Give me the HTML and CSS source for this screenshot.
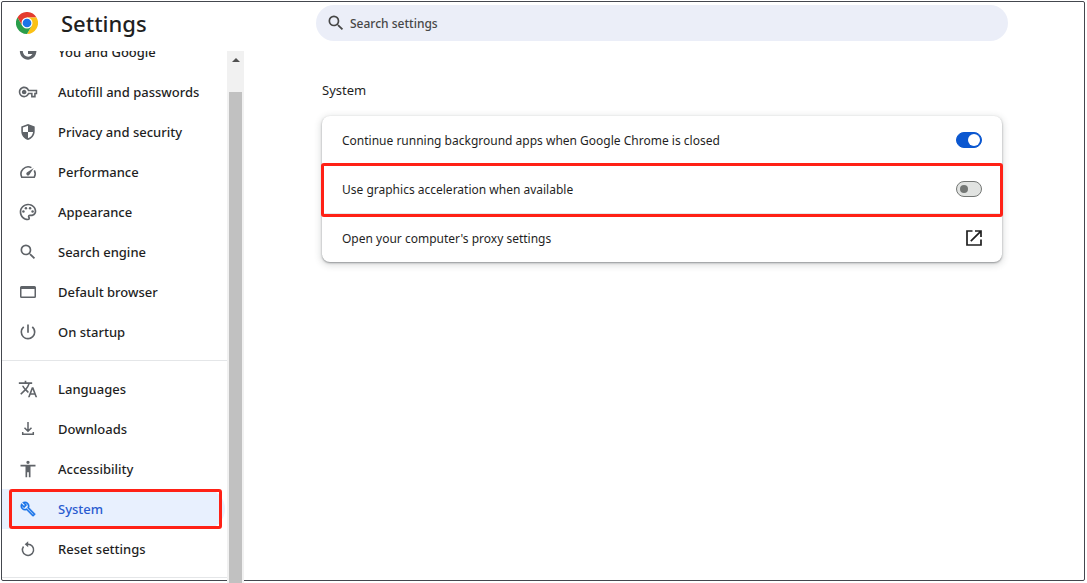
FILE: index.html
```html
<!DOCTYPE html>
<html lang="en">
<head>
<meta charset="utf-8">
<meta name="viewport" content="width=device-width, initial-scale=1">
<title>Settings - System</title>
<link rel="stylesheet" href="styles.css">
</head>
<body>
<div class="window">
  <header class="toolbar">
    <div class="brand">
      <svg class="logo" viewBox="0 0 48 48" aria-hidden="true">
        <path fill="#e33b2e" d="M24 12h20.800A24 24 0 0 0 3.200 12L13.600 30z"/>
        <path fill="#fbc116" d="M24 12h20.800A24 24 0 0 1 24 48l10.400-18z"/>
        <path fill="#2a9d4a" d="M34.400 30 24 48A24 24 0 0 1 3.200 12L13.600 30z"/>
        <circle cx="24" cy="24" r="12" fill="#fff"/>
        <circle cx="24" cy="24" r="9.500" fill="#1a73e8"/>
      </svg>
      <h1 class="title">Settings</h1>
    </div>
    <div class="search-area">
      <label class="search">
        <svg class="search-icon" viewBox="0 0 24 24" aria-hidden="true"><path d="M15.500 14h-.79l-.28-.27A6.470 6.470 0 0 0 16 9.500 6.500 6.500 0 1 0 9.500 16c1.610 0 3.090-.59 4.230-1.570l.27.28v.79l5 4.990L20.490 19l-4.990-5zm-6 0C7.010 14 5 11.990 5 9.500S7.010 5 9.500 5 14 7.010 14 9.500 11.990 14 9.500 14z"/></svg>
        <input class="search-input" type="search" placeholder="Search settings" aria-label="Search settings">
      </label>
    </div>
  </header>
  <div class="content">
    <nav class="sidebar" aria-label="Settings">
      <div class="menu">
        <a class="item" href="#people"><svg class="icon" viewBox="0 0 20 20" aria-hidden="true"><path d="M15.300 5.200A6.700 6.700 0 1 0 16.700 10.500H10" fill="none" stroke="currentColor" stroke-width="3"/></svg>You and Google</a>
        <a class="item" href="#autofill"><svg class="icon" viewBox="-1 -1 26 26" aria-hidden="true"><path d="M22 19h-6v-4h-2.680c-1.140 2.420-3.600 4-6.320 4-3.860 0-7-3.140-7-7s3.140-7 7-7c2.720 0 5.170 1.580 6.320 4H24v6h-2v4zm-4-2h2v-4h2v-2H11.940l-.23-.67C11.010 8.340 9.110 7 7 7c-2.760 0-5 2.240-5 5s2.240 5 5 5c2.110 0 4.010-1.340 4.710-3.330l.23-.67H18v4zM7 15c-1.650 0-3-1.350-3-3s1.350-3 3-3 3 1.350 3 3-1.350 3-3 3z"/></svg>Autofill and passwords</a>
        <a class="item" href="#privacy"><svg class="icon" viewBox="0 0 20 20" aria-hidden="true"><path fill-rule="evenodd" d="M10 2 3.300 4.500V9.200C3.300 13.500 6 16.800 10 18c4-1.200 6.700-4.500 6.700-8.800V4.500zM10 3.700v6.300H15.100c-.4 3-2.300 5.300-5.100 6.300V10H4.900V5.600z"/></svg>Privacy and security</a>
        <a class="item" href="#performance"><svg class="icon" viewBox="0 0 20 20" aria-hidden="true"><path d="M13.400 5.600A7.200 7.200 0 0 0 3.800 15.300H16.200A7.200 7.200 0 0 0 16.300 8.300" fill="none" stroke="currentColor" stroke-width="1.600"/><path d="M15.800 6 11.200 13A1.600 1.600 0 0 1 8.800 10.600z"/></svg>Performance</a>
        <a class="item" href="#appearance"><svg class="icon" viewBox="0 0 24 24" aria-hidden="true"><path d="M12 22C6.490 22 2 17.510 2 12S6.490 2 12 2s10 4.040 10 9c0 3.310-2.690 6-6 6h-1.770c-.28 0-.5.220-.5.500 0 .12.050.23.130.33.410.47.640 1.060.640 1.670A2.500 2.500 0 0 1 12 22zm0-18c-4.410 0-8 3.590-8 8s3.590 8 8 8c.28 0 .5-.22.5-.5a.54.54 0 0 0-.14-.35c-.41-.46-.63-1.050-.63-1.650a2.500 2.500 0 0 1 2.500-2.500H16c2.210 0 4-1.790 4-4 0-3.860-3.590-7-8-7z"/><circle cx="6.500" cy="11.500" r="1.500"/><circle cx="9.500" cy="7.500" r="1.500"/><circle cx="14.500" cy="7.500" r="1.500"/><circle cx="17.500" cy="11.500" r="1.500"/></svg>Appearance</a>
        <a class="item" href="#search"><svg class="icon" viewBox="0 0 24 24" aria-hidden="true"><path d="M15.500 14h-.79l-.28-.27A6.470 6.470 0 0 0 16 9.500 6.500 6.500 0 1 0 9.500 16c1.610 0 3.090-.59 4.230-1.570l.27.28v.79l5 4.990L20.490 19l-4.990-5zm-6 0C7.010 14 5 11.990 5 9.500S7.010 5 9.500 5 14 7.010 14 9.500 11.990 14 9.500 14z"/></svg>Search engine</a>
        <a class="item" href="#browser"><svg class="icon" viewBox="0 0 20 20" aria-hidden="true"><path fill-rule="evenodd" d="M3.500 4h13A1.500 1.500 0 0 1 18 5.500v9a1.500 1.500 0 0 1-1.500 1.500h-13A1.500 1.500 0 0 1 2 14.500v-9A1.500 1.500 0 0 1 3.500 4zM3.500 7v7.500h13V7z"/></svg>Default browser</a>
        <a class="item" href="#startup"><svg class="icon" viewBox="0 0 24 24" aria-hidden="true"><path d="M13 3h-2v10h2V3zm4.830 2.170-1.420 1.420A6.920 6.920 0 0 1 19 12c0 3.870-3.130 7-7 7A6.995 6.995 0 0 1 7.580 6.580L6.170 5.170A8.932 8.932 0 0 0 3 12a9 9 0 0 0 18 0c0-2.740-1.230-5.180-3.170-6.830z"/></svg>On startup</a>
        <hr class="divider">
        <a class="item" href="#languages"><svg class="icon" viewBox="0 0 24 24" aria-hidden="true"><path d="m12.870 15.070-2.540-2.510.03-.03A17.520 17.520 0 0 0 14.070 6H17V4h-7V2H8v2H1v1.990h11.170C11.500 7.920 10.440 9.750 9 11.350 8.070 10.320 7.300 9.190 6.690 8h-2c.73 1.630 1.730 3.170 2.980 4.560l-5.090 5.020L4 19l5-5 3.110 3.110.76-2.040zM18.500 10h-2L12 22h2l1.120-3h4.750L21 22h2l-4.500-12zm-2.620 7 1.620-4.330L19.120 17h-3.240z"/></svg>Languages</a>
        <a class="item" href="#downloads"><svg class="icon" viewBox="0 0 20 20" aria-hidden="true"><path d="M10 3v9M6.500 8.700 10 12.200l3.500-3.500M4.700 13v2.200H15.300V13" fill="none" stroke="currentColor" stroke-width="1.500"/></svg>Downloads</a>
        <a class="item" href="#accessibility"><svg class="icon" viewBox="0 0 24 24" aria-hidden="true"><path d="M12 2a2 2 0 1 1 0 4 2 2 0 0 1 0-4zm9 7h-6v13h-2v-6h-2v6H9V9H3V7h18v2z"/></svg>Accessibility</a>
        <a class="item item-current" href="#system" aria-current="page"><svg class="icon" viewBox="-3 -3 30 30" aria-hidden="true"><path stroke="currentColor" stroke-width=".6" d="m22.610 18.990-9.080-9.080c.93-2.340.45-5.100-1.440-7C9.790.610 6.210.4 3.660 2.260L7.500 6.110 6.080 7.520 2.250 3.690C.39 6.230.6 9.820 2.900 12.110c1.860 1.860 4.570 2.350 6.890 1.480l9.110 9.110c.39.39 1.020.39 1.410 0l2.300-2.300c.4-.38.4-1.010 0-1.410zm-3 1.600-9.460-9.460c-.61.45-1.290.72-2 .82-1.360.2-2.790-.21-3.830-1.250C3.370 9.760 2.930 8.500 3 7.260l3.090 3.090 4.240-4.240-3.090-3.090c1.240-.07 2.490.37 3.440 1.310 1.080 1.080 1.490 2.570 1.240 3.960-.12.71-.42 1.370-.88 1.960l9.450 9.450-.88.89z"/></svg>System</a>
        <a class="item" href="#reset"><svg class="icon" viewBox="0 0 20 20" aria-hidden="true"><path d="M8.300 5.200H10A5.600 5.600 0 1 1 5.500 7.500" fill="none" stroke="currentColor" stroke-width="1.500"/><path d="M6.700 5.200 10.200 2.200V8.200z"/></svg>Reset settings</a>
        <hr class="divider">
      </div>
    </nav>
    <div class="scrollbar" aria-hidden="true">
      <div class="scroll-up"></div>
      <div class="scroll-thumb"></div>
    </div>
    <main class="main">
      <section class="section">
        <h2 class="heading">System</h2>
        <div class="card">
          <label class="row">
            <span class="row-label">Continue running background apps when Google Chrome is closed</span>
            <input class="toggle" type="checkbox" role="switch" checked>
          </label>
          <label class="row row-marked">
            <span class="row-label">Use graphics acceleration when available</span>
            <input class="toggle" type="checkbox" role="switch">
          </label>
          <button class="row" type="button">
            <span class="row-label">Open your computer's proxy settings</span>
            <svg class="launch" viewBox="0 0 16 16" aria-hidden="true"><path d="M6.500 1H1v14h14V9.500M9 1h6v6M14.700 1.300 4.800 11.200" fill="none" stroke="currentColor" stroke-width="1.700"/></svg>
          </button>
        </div>
      </section>
    </main>
  </div>
</div>
</body>
</html>
```
FILE: styles.css
```css
* {
  box-sizing: border-box;
}

body {
  margin: 0;
  padding: 1px 2px 2px 1px;
  height: 100vh;
  overflow: hidden;
  background: #fff;
  color: #1f1f1f;
  font: 12px/20px "Noto Sans", "Open Sans", sans-serif;
}

.window {
  display: flex;
  flex-direction: column;
  height: 100%;
  border: 1px solid #44474e;
  border-radius: 2px;
}

.toolbar {
  display: flex;
  flex: none;
  height: 49px;
}

.brand {
  display: flex;
  align-items: center;
  gap: 23px;
  width: 242px;
  height: 42px;
  padding-left: 14px;
}

.logo {
  width: 22px;
  height: 22px;
}

.title {
  margin: 0;
  font-size: 22px;
  font-weight: 500;
  line-height: 28px;
}

.search-area {
  flex: 1;
  padding: 3px 4px 0 0;
}

.search {
  display: flex;
  align-items: center;
  gap: 4px;
  max-width: 692px;
  height: 36px;
  margin: 0 auto;
  padding: 0 16px 0 10px;
  border-radius: 18px;
  background: #ebeef8;
  color: #474747;
}

.search-icon {
  width: 20px;
  height: 20px;
  fill: currentColor;
}

.search-input {
  flex: 1;
  min-width: 0;
  padding: 2px 0 0;
  border: 0;
  outline: 0;
  background: none;
  color: inherit;
  font: inherit;
  font-weight: 500;
}

.search-input::placeholder {
  color: inherit;
}

.content {
  display: flex;
  flex: 1;
  min-height: 0;
}

.sidebar {
  flex: none;
  width: 225px;
  overflow: hidden;
}

.menu {
  margin-top: -19px;
}

.item {
  position: relative;
  display: flex;
  align-items: center;
  gap: 20px;
  height: 40px;
  padding-left: 16px;
  color: #1f1f1f;
  font-size: 13px;
  font-weight: 500;
  text-decoration: none;
}

.icon {
  width: 20px;
  height: 20px;
  color: #5f6368;
  fill: currentColor;
}

.item-current {
  margin-right: 2px;
  border-radius: 0 20px 20px 0;
  background: #e8f0fe;
  color: #2a5bd0;
}

.item-current .icon {
  color: #1a73e8;
}

.item-current::after {
  content: "";
  position: absolute;
  inset: 0 3px 0 7px;
  border: 3px solid #ff2116;
  border-radius: 3px;
}

.divider {
  height: 1px;
  margin: 8px 0;
  border: 0;
  background: #e4e6e8;
}

.scrollbar {
  display: flex;
  flex: none;
  flex-direction: column;
  width: 17px;
  margin-bottom: -3px;
  padding: 0 2px;
  background: #f1f1f1;
}

.scroll-up {
  flex: none;
  height: 41px;
  padding: 7px 3px;
}

.scroll-up::before {
  content: "";
  display: block;
  width: 0;
  border: 4px solid transparent;
  border-top: 0;
  border-bottom-color: #505050;
}

.scroll-thumb {
  flex: 1;
  background: #c1c1c1;
}

.main {
  flex: 1;
  min-width: 0;
  padding: 29px 4px 24px 0;
}

.section {
  max-width: 680px;
  margin: 0 auto;
}

.heading {
  margin: 0 0 16px;
  font-size: 13px;
  font-weight: 400;
  line-height: 20px;
}

.card {
  border-radius: 8px;
  background: #fff;
  box-shadow: 0 1px 2px rgba(60, 64, 67, 0.5), 0 2px 6px 2px rgba(60, 64, 67, 0.15);
}

.row {
  position: relative;
  display: flex;
  align-items: center;
  justify-content: space-between;
  width: 100%;
  min-height: 48px;
  padding: 0 20px;
  border: 0;
  background: none;
  color: inherit;
  font: inherit;
  text-align: left;
}

.row-label {
  padding-top: 2px;
}

.row + .row {
  min-height: 49px;
  border-top: 1px solid #e6e8ea;
}

.row-marked::after {
  content: "";
  position: absolute;
  inset: -2px -1px -4px;
  z-index: 1;
  border: 3px solid #ff2116;
  border-radius: 3px;
  pointer-events: none;
}

.toggle {
  display: flex;
  flex: none;
  align-items: center;
  appearance: none;
  width: 26px;
  height: 16px;
  margin: 0;
  padding: 0 3px;
  border: 1px solid #747775;
  border-radius: 8px;
  background: #e1e3e1;
}

.toggle::before {
  content: "";
  width: 8px;
  height: 8px;
  border-radius: 50%;
  background: #747775;
}

.toggle:checked {
  justify-content: flex-end;
  padding: 0 1px;
  border-color: #0b57d0;
  background: #0b57d0;
}

.toggle:checked::before {
  width: 12px;
  height: 12px;
  background: #fff;
}

.launch {
  flex: none;
  width: 16px;
  height: 16px;
}
```
